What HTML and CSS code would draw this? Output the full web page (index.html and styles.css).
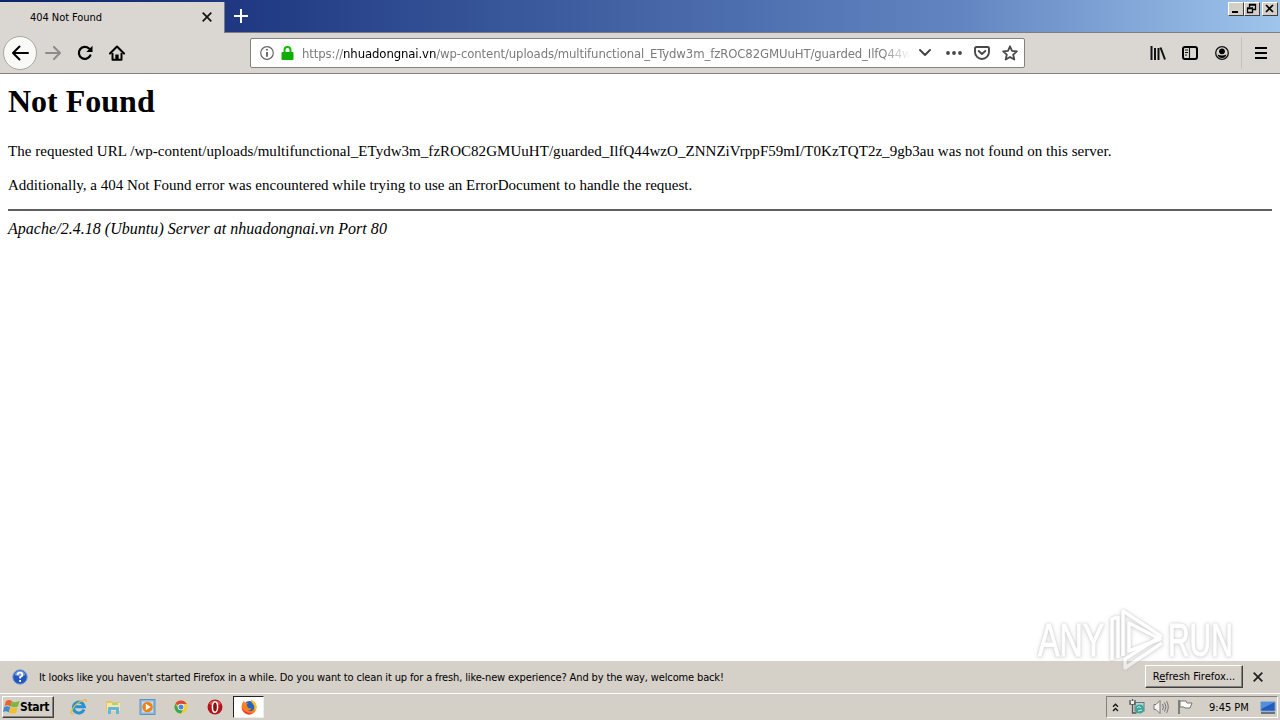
FILE: index.html
```html
<!DOCTYPE html>
<html lang="en">
<head>
<meta charset="utf-8">
<title>404 Not Found</title>
<link rel="stylesheet" href="styles.css">
</head>
<body>
<div class="desktop">
  <header class="titlebar">
    <div class="tab"><span class="tab-title">404 Not Found</span>
      <svg class="tab-close" width="10" height="10" viewBox="0 0 10 10"><path d="M.7.7l8.6 8.6M9.3.7L.7 9.3" stroke="#111" stroke-width="1.7"/></svg>
    </div>
    <svg class="new-tab" width="14" height="14" viewBox="0 0 14 14"><path d="M7 0v14M0 7h14" stroke="#fff" stroke-width="2"/></svg>
    <div class="window-controls">
      <span class="control"><svg width="15" height="13"><path d="M4 10h6" stroke="#000" stroke-width="2"/></svg></span>
      <span class="control"><svg width="15" height="13"><path d="M5.500 5V2.500h6v5H9M5 3h7M3.500 6.500h5v4h-5zM3 6h6" fill="none" stroke="#000" stroke-width="1.300"/></svg></span>
      <span class="control control-close"><svg width="15" height="13"><path d="M4 3l7 7M11 3l-7 7" stroke="#000" stroke-width="1.700"/></svg></span>
    </div>
  </header>
  <nav class="toolbar">
    <span class="back"><svg width="18" height="16" viewBox="0 0 18 16"><path d="M17 8H2M8.500 1.500L2 8l6.500 6.500" fill="none" stroke="#000" stroke-width="2" stroke-linecap="round" stroke-linejoin="round"/></svg></span>
    <svg class="forward" width="16" height="14" viewBox="0 0 16 14"><path d="M1 7h14M9 1l6 6-6 6" fill="none" stroke="#8e8c88" stroke-width="2" stroke-linecap="round" stroke-linejoin="round"/></svg>
    <svg class="reload" width="16" height="16" viewBox="0 0 16 16"><path d="M13.300 10.500A6 6 0 1 1 12 3.500" fill="none" stroke="#000" stroke-width="2.200" stroke-linecap="round"/><path d="M15.500.8V7H9.300z"/></svg>
    <svg class="home" width="16" height="16" viewBox="0 0 16 16"><path d="M1 8.500L8 1.500l7 7" fill="none" stroke="#000" stroke-width="2.100" stroke-linecap="round" stroke-linejoin="round"/><path d="M3.500 8v6.700h9V8" fill="none" stroke="#000" stroke-width="2" stroke-linejoin="round"/><path d="M6.300 15V9.500h3.400V15z"/></svg>
    <div class="urlbar">
      <svg class="info" width="14" height="14" viewBox="0 0 14 14"><circle cx="7" cy="7" r="6.300" fill="none" stroke="#666" stroke-width="1.200"/><path d="M7 3v1.600M7 6v4.800" stroke="#555" stroke-width="1.700"/></svg>
      <svg class="lock" width="13" height="14" viewBox="0 0 13 14"><path d="M3.500 7V4a3 3 0 0 1 6 0v3" fill="none" stroke="#12bc00" stroke-width="2"/><rect x=".5" y="6" width="12" height="8" rx="1" fill="#0fae05"/></svg>
      <div class="url">https://<span class="host">nhuadongnai.vn</span>/wp-content/uploads/multifunctional_ETydw3m_fzROC82GMUuHT/guarded_IlfQ44w</div>
      <svg class="dropdown" width="12" height="8" viewBox="0 0 12 8"><path d="M1 1l5 5 5-5" fill="none" stroke="#444" stroke-width="1.900" stroke-linecap="round" stroke-linejoin="round"/></svg>
      <svg class="page-actions" width="16" height="4" viewBox="0 0 16 4" fill="#484848"><circle cx="2" cy="2" r="1.900"/><circle cx="8" cy="2" r="1.900"/><circle cx="14" cy="2" r="1.900"/></svg>
      <svg class="pocket" width="16" height="14" viewBox="0 0 16 14" fill="none" stroke="#484848" stroke-width="1.900" stroke-linecap="round" stroke-linejoin="round"><path d="M2.300 1h11.400Q15 1 15 2.300V6A7 7 0 0 1 1 6V2.300Q1 1 2.300 1z"/><path d="M4.700 5L8 8l3.300-3"/></svg>
      <svg class="star" width="16" height="16" viewBox="0 0 16 16"><path d="M8 1.300l2 4.500 4.900.5-3.700 3.300 1.100 4.900L8 12l-4.300 2.500 1.100-4.900L1.100 6.300 6 5.800z" fill="none" stroke="#484848" stroke-width="1.800" stroke-linejoin="round"/></svg>
    </div>
    <svg class="library" width="16" height="16" viewBox="0 0 16 16"><path d="M1.500 1v14M5 3v12M8.500 3v12M10.500 2.500L15 14.500" stroke="#111" stroke-width="2"/></svg>
    <svg class="sidebar" width="16" height="14" viewBox="0 0 16 14"><rect x="1" y="1" width="14" height="12" rx="2" fill="none" stroke="#000" stroke-width="2"/><path d="M7.500 1v12M3 4h3M3 6.500h3M3 9h2" stroke="#111" stroke-width="1.100"/></svg>
    <svg class="account" width="14" height="14" viewBox="0 0 14 14"><circle cx="7" cy="7" r="6.300" fill="none" stroke="#111" stroke-width="1.300"/><circle cx="7" cy="5.300" r="2.900"/><path d="M2.600 8.500Q7 10.500 11.400 8.500 10.500 12 7 12T2.600 8.500z"/></svg>
    <span class="separator"></span>
    <svg class="menu" width="12" height="12" viewBox="0 0 12 12"><path d="M0 1h12M0 6h12M0 11h12" stroke="#000" stroke-width="2"/></svg>
  </nav>
  <main class="page">
    <h1 class="heading">Not Found</h1>
    <p class="para requested">The requested URL /wp-content/uploads/multifunctional_ETydw3m_fzROC82GMUuHT/guarded_IlfQ44wzO_ZNNZiVrppF59mI/T0KzTQT2z_9gb3au was not found on this server.</p>
    <p class="para additional">Additionally, a 404 Not Found error was encountered while trying to use an ErrorDocument to handle the request.</p>
    <hr class="rule">
    <address class="address">Apache/2.4.18 (Ubuntu) Server at nhuadongnai.vn Port 80</address>
  </main>
  <div class="notice">
    <svg class="help" width="16" height="16" viewBox="0 0 16 16"><circle cx="8" cy="8" r="7.300" fill="#2356bd" stroke="#8da6d4" stroke-width="1"/><path d="M2.500 6A5.700 5.700 0 0 1 13.500 6Q8 8.500 2.500 6z" fill="#6f98e1"/><path d="M5.600 6Q5.700 3.700 8 3.700T10.400 6Q10.400 7.200 8.100 8.200V9.500M8.100 11v2" fill="none" stroke="#fff" stroke-width="1.800"/></svg>
    <span class="notice-text">It looks like you haven't started Firefox in a while. Do you want to clean it up for a fresh, like-new experience? And by the way, welcome back!</span>
    <span class="refresh">R<u>e</u>fresh Firefox...</span>
    <svg class="notice-close" width="10" height="10" viewBox="0 0 10 10"><path d="M.7.7l8.600 8.600M9.300.7L.7 9.300" stroke="#222" stroke-width="1.800"/></svg>
  </div>
  <footer class="taskbar">
    <span class="start"><svg width="17" height="16" viewBox="0 0 17 16"><path d="M3 2Q6 0 9 2L7.500 7.500Q4.500 5.500 1.500 7z" fill="#e7642c"/><path d="M9 2.500Q12 4 16.500 2L15 7.500Q11 9 7.700 7.500z" fill="#77b843"/><path d="M1.200 8Q4 6.500 7.200 8L5.700 13.500Q3 11.500 0 13z" fill="#3d8bd3"/><path d="M7.500 8Q10.500 10 14.500 8L13 14Q9 15.500 6 13.500z" fill="#f5bd2c"/></svg><b class="start-label">Start</b></span>
    <span class="launch"><svg width="18" height="16" viewBox="0 0 18 16"><path d="M14 10.500A5.500 5.500 0 1 1 14.300 7.800H5" fill="none" stroke="#2492d8" stroke-width="3"/><path d="M4 14.500Q0 16 1.500 12 5 4 14 1q3-1 2 2" fill="none" stroke="#e8bd35" stroke-width="1.300"/></svg></span>
    <span class="launch"><svg width="17" height="16" viewBox="0 0 17 16"><path d="M1 2h6l1 1h7v9H1z" fill="#e6c567"/><path d="M2 4h13v8H2z" fill="#f7e6a1"/><path d="M3 14V9q0-1 1-1h9q1 0 1 1v6h-3v-4H6v4H3z" fill="#61b6df"/><path d="M7 5h6" stroke="#62b888"/></svg></span>
    <span class="launch"><svg width="17" height="16" viewBox="0 0 17 16"><rect x="1" y=".5" width="15" height="15" fill="#8eb9de" stroke="#5d93c5"/><rect x="3" y="2.500" width="11" height="11" fill="#c3ddf1"/><circle cx="8.500" cy="8" r="5.300" fill="#ef8214"/><path d="M6.800 4.800v6.400L11.800 8z" fill="#fff"/></svg></span>
    <span class="launch"><svg width="16" height="16" viewBox="0 0 16 16"><circle cx="8" cy="8" r="6.500" fill="#f6ce2e"/><path d="M8 8L2.400 4.700A6.500 6.500 0 0 1 13.700 5H8z" fill="#df4634"/><path d="M2.400 4.700A6.500 6.500 0 0 0 8 14.500L10.600 9.500 5.400 9.500z" fill="#3ca653"/><circle cx="8" cy="8" r="3.200" fill="#fff"/><circle cx="8" cy="8" r="2.500" fill="#4687df"/></svg></span>
    <span class="launch"><svg width="16" height="16" viewBox="0 0 16 16"><circle cx="8" cy="8" r="7.500" fill="#b51419"/><path d="M2 5A7 7 0 0 1 14 5Q8 8 2 5z" fill="#d95147"/><ellipse cx="8" cy="8" rx="2.600" ry="5.300" fill="#8c1012" stroke="#fff" stroke-width="1.500"/></svg></span>
    <span class="active-app"><svg width="16" height="16" viewBox="0 0 16 16"><circle cx="8.500" cy="8" r="6" fill="#2363c6"/><path d="M3 1.500L4 4l3 .3-1.500 2L7 8.500q1 1.500 3.500.5-1 3-4 2.500 4 2 6-1t-1-6Q10 2.500 10 .5q5 2.500 5.500 7A7.400 7.400 0 0 1 .7 9Q.2 5 3 1.500z" fill="#ff8217"/><path d="M10 .5q5 2.500 5.500 7 0 3-2 5 1-5-1.500-8Q10 3 10 .5z" fill="#ffc62c"/><path d="M.7 8a7.400 7.400 0 0 0 11 6.300Q3 14 .7 8z" fill="#f23552"/></svg></span>
    <div class="tray">
      <svg class="chevrons" width="7" height="9" viewBox="0 0 7 9"><path d="M1 3.700l2.500-2.500L6 3.700M1 8l2.500-2.500L6 8" fill="none" stroke="#111" stroke-width="1.300"/></svg>
      <svg class="network" width="16" height="16" viewBox="0 0 16 16"><rect x="6" y="3.500" width="9" height="8.500" fill="#aed6d8" stroke="#69777a"/><circle cx="10.500" cy="10" r="4.500" fill="#39a59b"/><path d="M8 9q2-3 4 0M9 12l4-1" stroke="#d4f2e4" fill="none"/><path d="M1 1v4h5V1M3.500 0v4M3.500 5v9h4" fill="none" stroke="#555" stroke-width="1.300"/><path d="M2 2h3v3H2z" fill="#eee"/></svg>
      <svg class="volume" width="16" height="16" viewBox="0 0 16 16"><path d="M1 5.500h2l4-4v13l-4-4H1z" fill="#f5f5f3" stroke="#777"/><path d="M9.500 5Q11.500 8 9.500 11M11.500 3.500Q14.500 8 11.500 12.500M13.500 2Q17 8 13.500 14" fill="none" stroke="#777"/></svg>
      <svg class="flag" width="16" height="16" viewBox="0 0 16 16"><path d="M2 1v14" stroke="#666" stroke-width="1.500"/><path d="M3 2h6l1 2h5l-2 5H8L7 8H3z" fill="#fafaf8" stroke="#777"/></svg>
      <span class="clock">9:45 PM</span>
      <svg class="show-desktop" width="16" height="13" viewBox="0 0 16 13"><path d="M1 1h14v9H1z" fill="#205dbd" stroke="#6c91c7"/><path d="M1 1h14L1 8z" fill="#5290dd"/><path d="M1 12h14" stroke="#44546b" stroke-width="1.500"/></svg>
    </div>
  </footer>
  <div class="watermark">
    <span class="mark mark-any">ANY</span>
    <svg class="mark-logo" width="56" height="64" viewBox="0 0 56 64" fill="none" stroke="#fff" stroke-width="3.500" stroke-linejoin="round"><path d="M3 52V11l6-2M9 50V8M14 48V3l38 25L16 51v9l37-25"/><path d="M20 43V15l31 16z"/></svg>
    <span class="mark mark-run">RUN</span>
  </div>
</div>
</body>
</html>
```
FILE: styles.css
```css
* { box-sizing: border-box; }
body { margin: 0; background: #fff; overflow: hidden; }
svg { display: block; flex: none; }
.desktop {
  position: relative;
  display: grid;
  grid-template-rows: 33px 41px 587px 32px 27px;
  width: 1280px;
  height: 720px;
  font-family: "DejaVu Sans Condensed", "DejaVu Sans", sans-serif;
  font-stretch: condensed;
  font-size: 11px;
  color: #000;
}
.titlebar {
  display: flex;
  background: linear-gradient(90deg, #0b246a 0, #203982 240px, #3d5c9f 560px, #6285c1 960px, #9fc5ec 1280px);
  border-bottom: 1px solid #7c7e81;
}
.tab {
  display: flex;
  align-items: center;
  width: 225px;
  height: 31px;
  margin-top: 2px;
  padding: 0 12px 1px 30px;
  background: #dad6d2;
  border-right: 1px solid #777c8a;
}
.tab-title { flex: 1; font-size: 11px; letter-spacing: -.05px; }
.new-tab { margin: 9px 0 0 9px; }
.window-controls { display: flex; margin: 2px 2px 0 auto; }
.control {
  width: 16px;
  height: 14px;
  background: #d4d0c8;
  border: 1px solid;
  border-color: #fff #404040 #404040 #fff;
}
.control-close { margin-left: 2px; }
.control svg { margin: -1px 0 0 -1px; }
.toolbar {
  display: flex;
  align-items: center;
  padding-left: 3px;
  background: #dad6d2;
  border-bottom: 1px solid #85827d;
}
.back {
  display: grid;
  place-items: center;
  width: 34px;
  height: 34px;
  background: #f9f9f8;
  border: 1px solid #aaa69f;
  border-radius: 50%;
}
.forward { margin-left: 8px; }
.reload { margin-left: 16px; }
.home { margin-left: 16px; }
.urlbar {
  display: flex;
  align-items: center;
  width: 775px;
  height: 30px;
  margin-left: 125px;
  padding: 0 6px 0 9px;
  background: #fff;
  border: 1px solid #85827d;
  border-radius: 2px;
}
.lock { margin-left: 7px; }
.url {
  width: 608px;
  margin: 1px 0 0 8px;
  color: #7b7b7b;
  font-family: "DejaVu Sans Condensed", "DejaVu Sans", sans-serif;
  font-size: 13px;
  letter-spacing: -.11px;
  line-height: 18px;
  white-space: nowrap;
  -webkit-mask-image: linear-gradient(90deg, #000 580px, transparent 608px);
  mask-image: linear-gradient(90deg, #000 580px, transparent 608px);
}
.host { color: #000; }
.dropdown { margin-left: 9px; }
.page-actions { margin-left: 15px; }
.pocket { margin-left: 12px; }
.star { margin-left: 12px; }
.library { margin-left: 125px; }
.sidebar { margin-left: 16px; }
.account { margin-left: 17px; }
.separator { width: 1px; height: 32px; margin-left: 12px; background: #c5c1bb; }
.menu { margin-left: 13px; }
.page {
  padding: 8px;
  background: #fff;
  font: 16px/18px "Liberation Serif", serif;
  white-space: nowrap;
}
.heading { margin: 0; font-size: 32px; line-height: 38px; }
.para { margin: 0; font-size: 15px; }
.requested { margin-top: 22px; letter-spacing: .04px; }
.additional { margin-top: 16px; }
.rule { height: 2px; margin: 15px 0 9px; border: 0; background: #606060; }
.address { font-style: italic; letter-spacing: .03px; }
.notice {
  display: flex;
  align-items: center;
  padding: 0 17px 0 12px;
  background: #d5d0c8;
}
.notice-text { flex: 1; margin-left: 11px; white-space: nowrap; letter-spacing: -.14px; }
.refresh {
  width: 98px;
  height: 23px;
  margin: -2px 10px 0 0;
  padding-top: 4px;
  border: 1px solid;
  border-color: #fff #404040 #404040 #fff;
  box-shadow: inset -1px -1px #85827d;
  text-align: center;
}
.taskbar {
  display: flex;
  align-items: center;
  padding: 0 2px;
  background: #d4d0c8;
  border-top: 1px solid #fff;
}
.start {
  display: flex;
  align-items: center;
  width: 52px;
  height: 22px;
  border: 1px solid;
  border-color: #fff #404040 #404040 #fff;
  box-shadow: inset -1px -1px #85827d;
}
.start-label { font-size: 12px; letter-spacing: -.3px; }
.launch { display: grid; place-items: center; width: 34px; }
.launch:nth-child(2) { margin-left: 8px; }
.active-app {
  display: grid;
  place-items: center;
  width: 31px;
  height: 22px;
  margin-left: 1px;
  background: #fff;
  border: 1px solid;
  border-color: #222 #eee #eee #222;
}
.tray {
  display: flex;
  align-items: center;
  width: 172px;
  height: 22px;
  margin-left: auto;
  padding: 0 1px 0 5px;
  border: 1px solid;
  border-color: #85827d #fff #fff #85827d;
}
.network { margin-left: 10px; }
.volume { margin-left: 8px; }
.flag { margin-left: 8px; }
.clock { flex: 1; margin-left: 16px; white-space: nowrap; letter-spacing: 0; }
.watermark {
  position: absolute;
  left: 1038px;
  top: 608px;
  display: flex;
  align-items: center;
  width: 196px;
  height: 64px;
  opacity: .6;
  filter: drop-shadow(0 0 1px #aaa) drop-shadow(0 1px 2px #ccc);
}
.mark {
  color: #fff;
  font: 46px/64px "Liberation Sans", sans-serif;
  -webkit-text-stroke: 1px #fff;
  transform-origin: left center;
}
.mark-any { width: 69px; transform: scaleX(.7); }
.mark-logo { margin-left: 2px; }
.mark-run { margin-left: 3px; transform: scaleX(.65); }
```
